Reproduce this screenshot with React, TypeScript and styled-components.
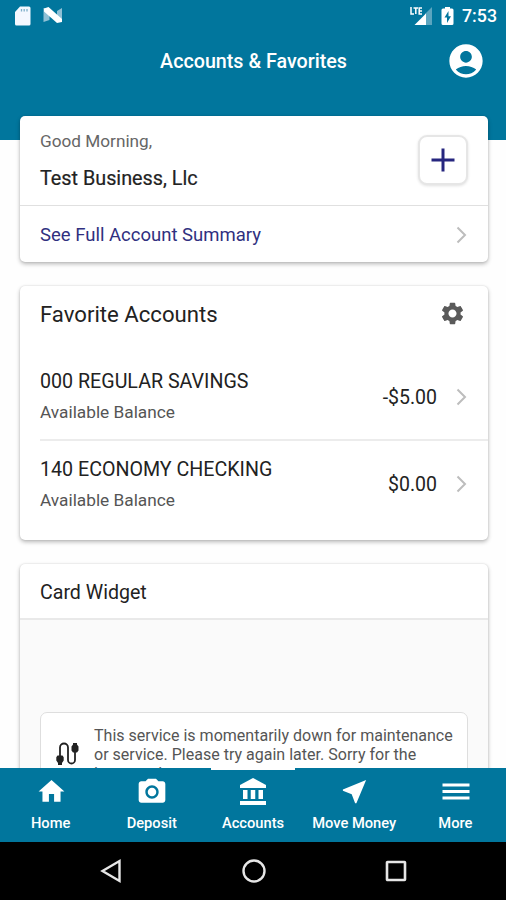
import React from "react";
import styled, { createGlobalStyle } from "styled-components";
import {
  MdAccountCircle,
  MdHome,
  MdNearMe,
  MdPhotoCamera,
  MdSettings,
} from "react-icons/md";

const Global = createGlobalStyle`
  * { box-sizing: border-box; }
  body { margin: 0; background: #fff; font-family: Roboto, sans-serif; color: #212121; }
  svg { display: block; flex: none; }
`;

const Screen = styled.div`
  width: 506px;
  height: 900px;
  display: flex;
  flex-direction: column;
  overflow: hidden;
  background: #fefefe;
`;

const Header = styled.header`
  flex: none;
  height: 140px;
  background: #01769d;
  color: #fff;
`;

const StatusBar = styled.div`
  height: 31px;
  display: flex;
  align-items: center;
  justify-content: space-between;
  padding: 0 9px 0 14px;
`;

const StatusGroup = styled.div<{ $gap: number }>`
  display: flex;
  align-items: center;
  gap: ${(p) => p.$gap}px;
`;

const Clock = styled.span`
  font-size: 17.8px;
  font-weight: 500;
  line-height: 32px;
`;

const TitleBar = styled.div`
  height: 60px;
  display: grid;
  grid-template-columns: 60px 1fr 60px;
  align-items: center;
`;

const Title = styled.h1`
  grid-column: 2;
  margin: 0;
  padding: 2px 0 0 1px;
  font-size: 19.7px;
  font-weight: 500;
  line-height: 58px;
  text-align: center;
  white-space: nowrap;
`;

const Content = styled.main`
  flex: 1;
  min-height: 0;
  overflow: visible;
  margin-top: -24px;
  padding: 0 18px 0 20px;
  display: flex;
  flex-direction: column;
  gap: 24px;
`;

const Card = styled.section<{ $height: number }>`
  flex: none;
  height: ${(p) => p.$height}px;
  background: #fff;
  border-radius: 5px;
  box-shadow: 0 2px 4px rgba(0, 0, 0, 0.28), 0 0 2px rgba(0, 0, 0, 0.12);
  overflow: hidden;
`;

const Greeting = styled.div`
  height: 90px;
  display: flex;
  justify-content: space-between;
  padding: 12px 20px 0;
  border-bottom: 1px solid #e0e0e0;
`;

const Salutation = styled.div`
  font-size: 17.2px;
  line-height: 26px;
  color: #666;
`;

const BusinessName = styled.div`
  margin-top: 11px;
  font-size: 19.8px;
  -webkit-text-stroke: 0.2px #222;
  line-height: 27px;
  color: #222;
`;

const AddButton = styled.button`
  width: 50px;
  height: 50px;
  margin-top: 7px;
  display: flex;
  align-items: center;
  justify-content: center;
  padding: 0;
  background: #fff;
  border: 2px solid #e6e6e6;
  border-radius: 9px;
  box-shadow: 0 1px 3px rgba(0, 0, 0, 0.12);
`;

const SummaryLink = styled.div`
  height: 57px;
  display: flex;
  align-items: center;
  justify-content: space-between;
  padding: 0 20px;
  font-size: 18.5px;
  color: #30307f;
`;

const FavoritesHeader = styled.div`
  height: 56px;
  display: flex;
  align-items: center;
  justify-content: space-between;
  padding: 0 22px 0 20px;
  font-size: 22.15px;
  color: #222;

  svg {
    margin-bottom: 2px;
  }
`;

const AccountRow = styled.div<{ $divided?: boolean }>`
  height: ${(p) => (p.$divided ? 87 : 86)}px;
  margin-left: 20px;
  padding-right: 20px;
  display: flex;
  align-items: center;
  border-bottom: ${(p) => (p.$divided ? "2px solid #ececec" : "0")};
`;

const Accounts = styled.div`
  padding-top: 12px;
`;

const AccountText = styled.div`
  flex: 1;
`;

const AccountName = styled.div`
  font-size: 19.65px;
  line-height: 31px;
  color: #222;
`;

const AccountNote = styled.div`
  font-size: 17.25px;
  line-height: 30px;
  color: #555;
`;

const Amount = styled.div`
  margin-right: 19px;
  padding-top: 1px;
  font-size: 19.5px;
  color: #222;
`;

const WidgetTitle = styled.div`
  height: 56px;
  padding-left: 20px;
  font-size: 19.6px;
  line-height: 58px;
  color: #222;
  border-bottom: 2px solid #e9e9e9;
`;

const WidgetBody = styled.div`
  height: 260px;
  padding: 92px 20px 0;
  background: #fafafa;
`;

const Notice = styled.div`
  height: 110px;
  display: flex;
  gap: 15px;
  padding: 13px 0 0 14px;
  background: #fff;
  border: 1px solid #dedede;
  border-radius: 7px;
`;

const NoticeIcon = styled.div`
  padding-top: 16px;
`;

const NoticeText = styled.p`
  margin: 0;
  font-size: 16.05px;
  line-height: 19px;
  color: #555;
  white-space: nowrap;
`;

const Footer = styled.footer`
  flex: none;
  z-index: 1;
`;

const Tabs = styled.nav`
  height: 74px;
  display: grid;
  grid-template-columns: repeat(5, 1fr);
  background: #01769d;
  color: #fff;
`;

const Tab = styled.div<{ $active?: boolean }>`
  display: flex;
  flex-direction: column;
  align-items: center;
  &::before {
    content: "";
    width: 84px;
    height: 2px;
    background: ${(p) => (p.$active ? "#fff" : "transparent")};
  }
`;

const TabIcon = styled.div`
  height: 43px;
  display: flex;
  align-items: center;
  padding-left: 1px;
`;

const TabLabel = styled.div`
  font-size: 14.7px;
  font-weight: 500;
  line-height: 20px;
  white-space: nowrap;
`;

const SystemKeys = styled.div`
  height: 58px;
  display: flex;
  justify-content: center;
  align-items: center;
  gap: 118px;
  background: #000;
`;

const Chevron = () => (
  <svg width="12" height="18" viewBox="0 0 12 18" fill="none" stroke="#bdbdbd" strokeWidth="2">
    <path d="M1.500 1.500 9 9 1.500 16.500" />
  </svg>
);

const CableIcon = () => (
  <svg width="24" height="24" viewBox="0 0 24 24" fill="none" stroke="#222" strokeWidth="1.800">
    <path d="M5 14V5.500a4 4 0 0 1 8 0V18a3.500 3.500 0 0 0 7 0V9" />
    <path d="M2.500 13.500h5l1.200 1.800v3.200L7 21v2H3v-2l-1.700-2.500v-3.200z" fill="#222" stroke="none" />
    <path d="M18 1h4v1.500L23.500 4.500v4L22 10.500h-4L16.500 8.500v-4l1.500-2z" fill="#222" stroke="none" />
  </svg>
);

const BankIcon = () => (
  <svg width="28" height="30" viewBox="0 0 28 30" fill="#fff">
    <path d="M14 1 27 8v3H1V8z" />
    <rect x="4" y="13" width="4.500" height="9" />
    <rect x="11.750" y="13" width="4.500" height="9" />
    <rect x="19.500" y="13" width="4.500" height="9" />
    <rect x="1" y="24" width="26" height="4" />
  </svg>
);

const MenuIcon = () => (
  <svg width="28" height="20" viewBox="0 0 28 20" fill="#fff">
    <rect x="0.500" y="1.500" width="27" height="3" />
    <rect x="0.500" y="8" width="27" height="3" />
    <rect x="0.500" y="14.500" width="27" height="3" />
  </svg>
);

const tabs = [
  { label: "Home", icon: <MdHome size={31} /> },
  { label: "Deposit", icon: <MdPhotoCamera size={32} /> },
  { label: "Accounts", icon: <BankIcon />, active: true },
  { label: "Move Money", icon: <MdNearMe size={31} /> },
  { label: "More", icon: <MenuIcon /> },
];

const accounts = [
  { name: "000 REGULAR SAVINGS", amount: "-$5.00" },
  { name: "140 ECONOMY CHECKING", amount: "$0.00" },
];

export default function App() {
  return (
    <>
      <Global />
      <Screen>
        <Header>
          <StatusBar>
            <StatusGroup $gap={12}>
              <svg width="17" height="20" viewBox="0 0 17 20">
                <path d="M6 0.500H15a1.500 1.500 0 0 1 1.500 1.500V18a1.500 1.500 0 0 1-1.500 1.500H2.500A1.500 1.500 0 0 1 1 18V6z" fill="#f4f8ff" />
                <path d="M7.500 3v2.500M10.200 3v2.500M13 3v2.500" stroke="#7eafc9" strokeWidth="1.300" />
              </svg>
              <svg width="20" height="17" viewBox="0 0 20 17">
                <path d="M0.500 1v14l6-2V3zM19 1v14l-5-2V4z" fill="#8fc0d5" />
                <path d="M1 1.500 5.500 0 19 12v3l-5 1L1 4.500z" fill="#fff" />
              </svg>
            </StatusGroup>
            <StatusGroup $gap={8}>
              <svg width="23" height="20" viewBox="0 0 23 20">
                <path d="M22 1v18h-7V8z" fill="#5ba5bf" />
                <path d="M4.500 19 16 7.500V19z" fill="#fff" />
                <path d="M1 1v7h3M3.500 2H8M5.800 2v6M12 2H9.200v6H12M9.200 5H12" fill="none" stroke="#fff" strokeWidth="1.500" />
              </svg>
              <svg width="13" height="20" viewBox="0 0 13 20">
                <path d="M4 1h5v1.500h2A1.500 1.500 0 0 1 12.500 4v13.500A1.500 1.500 0 0 1 11 19H2a1.500 1.500 0 0 1-1.500-1.500V4A1.500 1.500 0 0 1 2 2.500h2z" fill="#fff" />
                <path d="M7.500 5 3.500 11.500H6V17l4-6.800H7.500z" fill="#01769d" />
              </svg>
              <Clock>7:53</Clock>
            </StatusGroup>
          </StatusBar>
          <TitleBar>
            <Title>Accounts &amp; Favorites</Title>
            <MdAccountCircle size={40} />
          </TitleBar>
        </Header>

        <Content>
          <Card $height={146}>
            <Greeting>
              <div>
                <Salutation>Good Morning,</Salutation>
                <BusinessName>Test Business, Llc</BusinessName>
              </div>
              <AddButton aria-label="Add">
                <svg width="24" height="24" viewBox="0 0 24 24" stroke="#26267f" strokeWidth="3">
                  <path d="M12 0.500v23M0.500 12h23" />
                </svg>
              </AddButton>
            </Greeting>
            <SummaryLink>
              <span>See Full Account Summary</span>
              <Chevron />
            </SummaryLink>
          </Card>

          <Card $height={254}>
            <FavoritesHeader>
              <span>Favorite Accounts</span>
              <MdSettings size={27} color="#5a5a5a" />
            </FavoritesHeader>
            <Accounts>
              {accounts.map((a, i) => (
                <AccountRow key={a.name} $divided={i === 0}>
                  <AccountText>
                    <AccountName>{a.name}</AccountName>
                    <AccountNote>Available Balance</AccountNote>
                  </AccountText>
                  <Amount>{a.amount}</Amount>
                  <Chevron />
                </AccountRow>
              ))}
            </Accounts>
          </Card>

          <Card $height={320}>
            <WidgetTitle>Card Widget</WidgetTitle>
            <WidgetBody>
              <Notice>
                <NoticeIcon>
                  <CableIcon />
                </NoticeIcon>
                <NoticeText>
                  This service is momentarily down for maintenance
                  <br />
                  or service. Please try again later. Sorry for the
                  <br />
                  inconvenience.
                </NoticeText>
              </Notice>
            </WidgetBody>
          </Card>
        </Content>

        <Footer>
          <Tabs>
            {tabs.map((t) => (
              <Tab key={t.label} $active={t.active}>
                <TabIcon>{t.icon}</TabIcon>
                <TabLabel>{t.label}</TabLabel>
              </Tab>
            ))}
          </Tabs>
          <SystemKeys>
            <svg width="24" height="26" viewBox="0 0 24 26" fill="none" stroke="#e6e6e6" strokeWidth="2.400">
              <path d="M20.500 3v20L3.500 13z" />
            </svg>
            <svg width="26" height="26" viewBox="0 0 26 26" fill="none" stroke="#e6e6e6" strokeWidth="2.400">
              <circle cx="13" cy="13" r="10.500" />
            </svg>
            <svg width="22" height="22" viewBox="0 0 22 22" fill="none" stroke="#e6e6e6" strokeWidth="2.600">
              <rect x="2" y="2" width="18" height="18" rx="0.500" />
            </svg>
          </SystemKeys>
        </Footer>
      </Screen>
    </>
  );
}
